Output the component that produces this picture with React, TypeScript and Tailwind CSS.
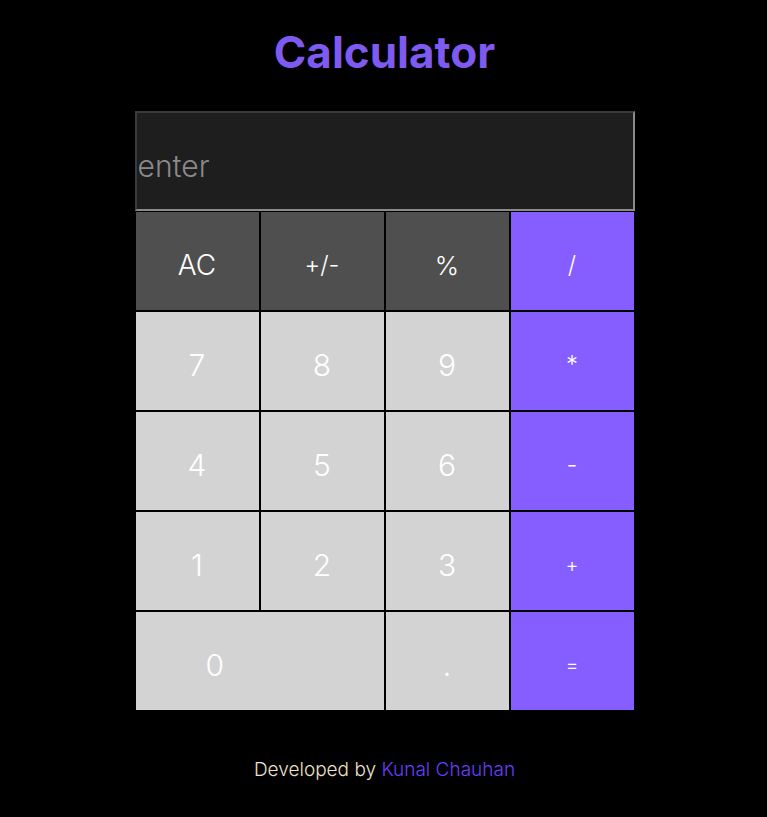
import { useState } from 'react'

const ops = 'bg-[#865dff]'
const dark = 'bg-[#4f4f4f]'
const light = 'bg-[#d3d3d3]'

type Key = { label: string; bg: string; wide?: boolean; size?: string }

const keys: Key[] = [
  { label: 'AC', bg: dark, size: 'text-[28px]' },
  { label: '+/-', bg: dark, size: 'text-[24px]' },
  { label: '%', bg: dark, size: 'text-[26px]' },
  { label: '/', bg: ops, size: 'text-[24px]' },
  { label: '7', bg: light },
  { label: '8', bg: light },
  { label: '9', bg: light },
  { label: '*', bg: ops, size: 'text-[24px]' },
  { label: '4', bg: light },
  { label: '5', bg: light },
  { label: '6', bg: light },
  { label: '-', bg: ops, size: 'text-[24px]' },
  { label: '1', bg: light },
  { label: '2', bg: light },
  { label: '3', bg: light },
  { label: '+', bg: ops, size: 'text-[20px]' },
  { label: '0', bg: light, wide: true },
  { label: '.', bg: light },
  { label: '=', bg: ops, size: 'text-[20px]' },
]

export default function App() {
  const [value, setValue] = useState('')

  return (
    <div className="min-h-screen bg-black flex flex-col items-center pl-[2px] font-['Inter',sans-serif]">
      <h1 className="mt-[24px] h-[56px] text-[44px] leading-[56px] font-bold text-[#7f5af0]">
        Calculator
      </h1>

      <div className="mt-[31px] w-[500px]">
        <input
          value={value}
          onChange={(e) => setValue(e.target.value)}
          placeholder="enter"
          className="block w-full h-[100px] bg-[#1e1e1e] border-2 border-t-[#3a3a3a] border-l-[#3a3a3a] border-r-[#8a8a8a] border-b-[#8a8a8a] pl-[1px] pt-[10px] text-[30px] font-light text-white placeholder:text-[#8a8a8a] outline-none"
        />
        <div className="grid grid-cols-4">
          {keys.map((k) => (
            <button
              key={k.label}
              onClick={() => setValue((v) => (k.label === 'AC' ? '' : v + k.label))}
              className={`h-[100px] border border-black flex items-center pt-[8px] text-white font-light ${k.bg} ${k.size ?? 'text-[30px]'} ${k.wide ? 'col-span-2 justify-start pl-[70px]' : 'justify-center'}`}
            >
              {k.label}
            </button>
          ))}
        </div>
      </div>

      <p className="mt-[45px] text-[19px] font-light text-[#ece2cf]">
        Developed by <span className="text-[#6a3dff]">Kunal Chauhan</span>
      </p>
    </div>
  )
}
